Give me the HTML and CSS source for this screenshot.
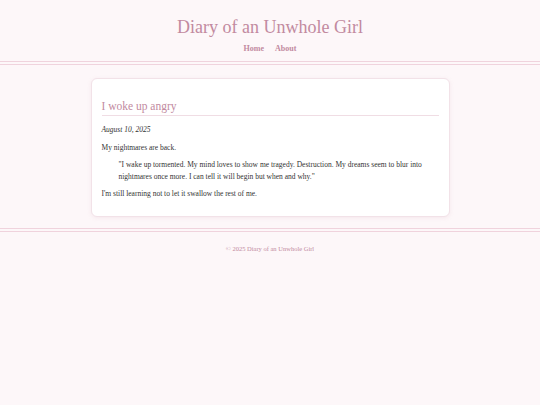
FILE: index.html
```html
<!DOCTYPE html>
<html lang="en">
<head>
<meta charset="utf-8">
<title>Diary of an Unwhole Girl</title>
<link rel="stylesheet" href="styles.css">
</head>
<body>
<header class="site-header">
  <h1 class="site-title">Diary of an Unwhole Girl</h1>
  <nav class="site-nav">
    <a href="#">Home</a>
    <a href="#">About</a>
  </nav>
</header>
<main class="content">
  <article class="post">
    <h2 class="post-title">I woke up angry</h2>
    <p class="post-date">August 10, 2025</p>
    <p>My nightmares are back.</p>
    <blockquote class="post-quote">"I wake up tormented. My mind loves to show me tragedy. Destruction. My dreams seem to blur into nightmares once more. I can tell it will begin but when and why."</blockquote>
    <p>I'm still learning not to let it swallow the rest of me.</p>
  </article>
</main>
<footer class="site-footer">
  <p>© 2025 Diary of an Unwhole Girl</p>
</footer>
</body>
</html>
```
FILE: styles.css
```css
html, body {
  margin: 0;
  padding: 0;
}
body {
  background: #fdf7f9;
  font-family: "Liberation Serif", "DejaVu Serif", serif;
  color: #333;
}
.site-header {
  text-align: center;
  padding: 15px 0 8px;
  border-bottom: 4px double #f0d3dd;
}
.site-title {
  margin: 0;
  font-size: 18px;
  font-weight: normal;
  color: #c28aa0;
  line-height: 24px;
}
.site-nav {
  margin-top: 5px;
  display: flex;
  justify-content: center;
  gap: 11px;
  font-size: 8px;
  font-weight: bold;
}
.site-nav a {
  color: #c28aa0;
  text-decoration: none;
}
.content {
  padding: 13px 0 11px;
}
.post {
  width: 337px;
  margin: 0 auto;
  background: #fff;
  border: 1px solid #f2e2e8;
  border-radius: 6px;
  box-shadow: 0 1px 4px rgba(200, 150, 170, 0.15);
  padding: 20px 10px 16px;
  font-size: 7.5px;
  line-height: 12px;
}
.post-title {
  margin: 0 0 8px;
  font-size: 11.5px;
  font-weight: normal;
  color: #c28aa0;
  line-height: 14px;
  padding-bottom: 2px;
  border-bottom: 1px solid #f0dde4;
}
.post p {
  margin: 0 0 6px;
}
.post-date {
  font-style: italic;
}
.post-quote {
  margin: -1px 8px 5px 17px;
}
.post p:last-child {
  margin-bottom: 0;
}
.site-footer {
  border-top: 4px double #f0d3dd;
  text-align: center;
  padding-top: 13px;
}
.site-footer p {
  margin: 0;
  font-size: 6.5px;
  line-height: 8px;
  color: #c28aa0;
}
```
